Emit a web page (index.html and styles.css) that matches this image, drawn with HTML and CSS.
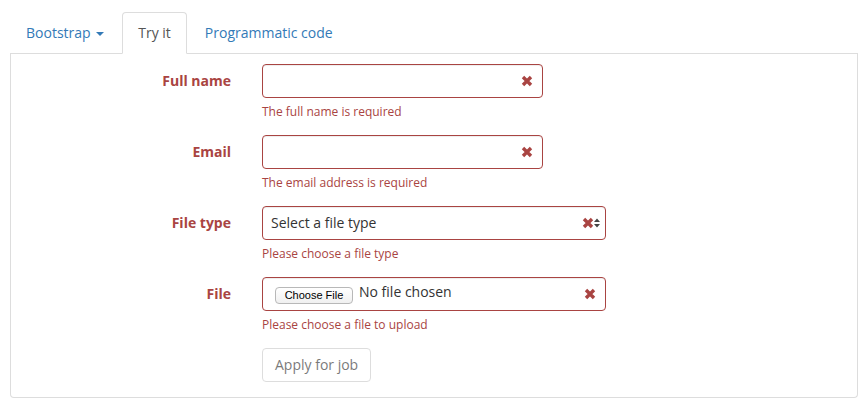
FILE: index.html
```html
<!DOCTYPE html>
<html>
<head>
<meta charset="utf-8">
<link rel="stylesheet" href="styles.css">
</head>
<body>
<div class="wrap">
  <ul class="tabs">
    <li class="tab"><a class="tab-link">Bootstrap <span class="caret"></span></a></li>
    <li class="tab active"><a class="tab-link">Try it</a></li>
    <li class="tab"><a class="tab-link">Programmatic code</a></li>
  </ul>
  <div class="panel">
    <form class="form">
      <div class="group">
        <label class="label">Full name</label>
        <div class="field">
          <div class="control w-short"><span class="feedback"><svg viewBox="0 0 12 12" width="12" height="12"><path d="M2 2 L10 10 M10 2 L2 10" stroke="#a94442" stroke-width="3.4"/></svg></span></div>
          <div class="help">The full name is required</div>
        </div>
      </div>
      <div class="group">
        <label class="label">Email</label>
        <div class="field">
          <div class="control w-short"><span class="feedback"><svg viewBox="0 0 12 12" width="12" height="12"><path d="M2 2 L10 10 M10 2 L2 10" stroke="#a94442" stroke-width="3.4"/></svg></span></div>
          <div class="help">The email address is required</div>
        </div>
      </div>
      <div class="group">
        <label class="label">File type</label>
        <div class="field">
          <div class="control w-long select-control">
            <span class="select-text">Select a file type</span>
            <span class="feedback feedback-select"><svg viewBox="0 0 12 12" width="12" height="12"><path d="M2 2 L10 10 M10 2 L2 10" stroke="#a94442" stroke-width="3.4"/></svg></span>
            <span class="arrows"><svg viewBox="0 0 6 10" width="6" height="10"><path d="M0 4 L3 0.5 L6 4 Z M0 6 L3 9.5 L6 6 Z" fill="#444"/></svg></span>
          </div>
          <div class="help">Please choose a file type</div>
        </div>
      </div>
      <div class="group">
        <label class="label">File</label>
        <div class="field">
          <div class="control w-long file-control">
            <span class="file-btn">Choose File</span>
            <span class="file-text">No file chosen</span>
            <span class="feedback"><svg viewBox="0 0 12 12" width="12" height="12"><path d="M2 2 L10 10 M10 2 L2 10" stroke="#a94442" stroke-width="3.4"/></svg></span>
          </div>
          <div class="help">Please choose a file to upload</div>
        </div>
      </div>
      <div class="group">
        <div></div>
        <div class="field">
          <span class="btn">Apply for job</span>
        </div>
      </div>
    </form>
  </div>
</div>
</body>
</html>
```
FILE: styles.css
```css
* { box-sizing: border-box; }
html, body { margin: 0; padding: 0; background: #fff; }
body {
  font-family: "Open Sans", "Liberation Sans", sans-serif;
  font-size: 14px;
  line-height: 20px;
  color: #333;
}
.wrap { padding: 12px 10px 0 10px; }
.tabs {
  list-style: none;
  margin: 0;
  padding: 0;
  display: flex;
  border-bottom: 1px solid #ddd;
}
.tab { margin-bottom: -1px; margin-right: 2px; }
.tab-link {
  display: block;
  padding: 10px 15px;
  border: 1px solid transparent;
  border-radius: 4px 4px 0 0;
  color: #337ab7;
  line-height: 20px;
}
.tab.active .tab-link {
  color: #555;
  background: #fff;
  border-color: #ddd #ddd transparent #ddd;
}
.caret {
  display: inline-block;
  width: 0;
  height: 0;
  margin-left: 2px;
  vertical-align: middle;
  border-top: 4px solid;
  border-left: 4px solid transparent;
  border-right: 4px solid transparent;
}
.panel {
  border: 1px solid #ddd;
  border-top: none;
  border-radius: 0 0 4px 4px;
  padding: 10px 0 0 0;
}
.group {
  display: grid;
  grid-template-columns: 220px 1fr;
  column-gap: 31px;
  margin-bottom: 15px;
}
.label {
  text-align: right;
  font-weight: 700;
  color: #a94442;
  line-height: 20px;
  padding-top: 7px;
}
.control {
  position: relative;
  height: 34px;
  border: 1px solid #a94442;
  border-radius: 4px;
  background: #fff;
  box-shadow: inset 0 1px 1px rgba(0,0,0,.075);
  padding: 6px 12px;
  color: #555;
}
.w-short { width: 281px; }
.w-long { width: 344px; }
.feedback {
  position: absolute;
  top: 0;
  right: 0;
  width: 31px;
  height: 32px;
  display: flex;
  align-items: center;
  justify-content: center;
}
.feedback-select { width: 34px; }
.feedback svg { display: block; }
.select-control { padding-left: 8px; }
.select-text { color: #333; }
.arrows {
  position: absolute;
  right: 5px;
  top: 11px;
  display: block;
}
.arrows svg { display: block; }
.file-control {
  display: flex;
  align-items: flex-start;
  padding: 4px 12px;
  color: #333;
}
.file-btn {
  margin-top: 5px;
  height: 17px;
  padding: 0 6px;
  border: 1px solid #b8b8b8;
  border-radius: 4px;
  background: linear-gradient(#fff, #f0f0f0);
  font-family: "Liberation Sans", Arial, sans-serif;
  font-size: 11px;
  line-height: 15px;
  color: #000;
  width: 78px;
  text-align: center;
}
.file-text { margin-left: 6px; }
.help {
  margin-top: 5px;
  font-size: 12px;
  line-height: 17px;
  color: #a94442;
}
.btn {
  display: inline-block;
  padding: 6px 12px;
  border: 1px solid #ccc;
  border-radius: 4px;
  color: #333;
  background: #fff;
  opacity: .65;
  line-height: 20px;
}
```
